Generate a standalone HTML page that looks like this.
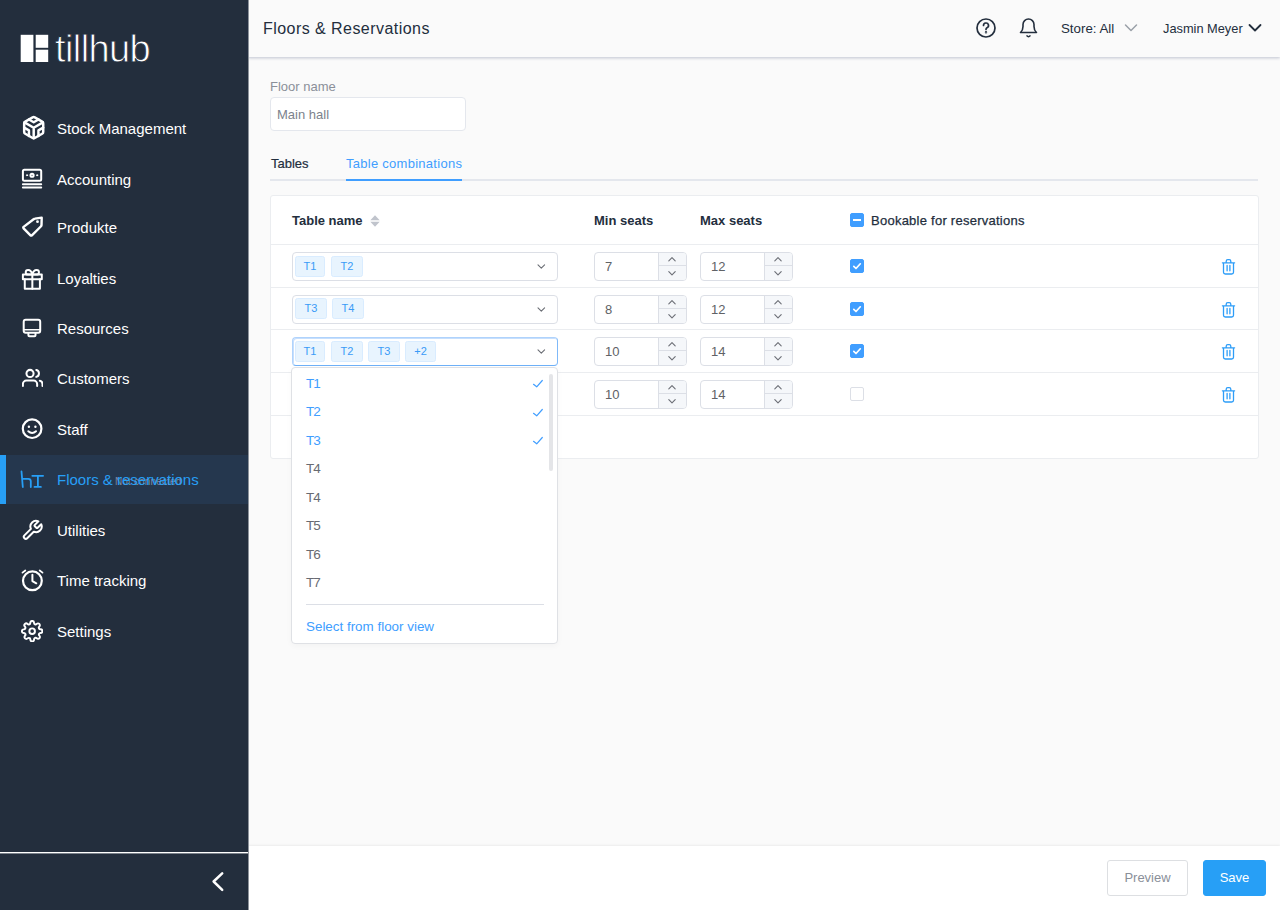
<!DOCTYPE html>
<html lang="en">
<head>
<meta charset="utf-8">
<title>Floors &amp; Reservations</title>
<style>
*{box-sizing:border-box;margin:0;padding:0}
html,body{width:1280px;height:910px;overflow:hidden}
body{font-family:"Liberation Sans",sans-serif;background:#fafafa;color:#232e3d;position:relative}
.abs{position:absolute}
/* sidebar */
#side{position:absolute;left:0;top:0;width:248px;height:910px;background:#232e3d;color:#fff}
#side .item{position:absolute;left:0;width:248px;height:50px}
#side .item .lbl{position:absolute;left:57px;top:0;height:50px;line-height:50px;font-size:15px;white-space:nowrap;color:#fff}
#side .item svg{position:absolute;left:20px;top:13px;width:24px;height:24px;fill:none;stroke:#fff;stroke-width:2;stroke-linecap:round;stroke-linejoin:round}
#side .item.act{background:#25374e;height:49px}
#side .item.act:before{content:"";position:absolute;left:0;top:0;width:6px;height:100%;background:#279ff6}
#side .item.act .lbl{color:#279ff6}
#side .item.act svg{stroke:#279ff6}
/* header */
#head{position:absolute;left:248px;top:0;width:1032px;height:57px;background:#fafafa;box-shadow:0 1px 3px rgba(40,55,100,.28)}
#head .title{position:absolute;left:15px;top:0;line-height:57px;font-size:16px;letter-spacing:.45px;color:#232e3d;white-space:nowrap}
#head .txt{position:absolute;top:0;line-height:57px;font-size:13.300px;color:#232e3d;white-space:nowrap}
/* content */
.t13{font-size:13px;white-space:nowrap}
#card{position:absolute;left:270px;top:195px;width:989px;height:264px;background:#fff;border:1px solid #ebedf0;border-radius:3px}
.hr{position:absolute;left:0;width:987px;height:1px;background:#ebedf0}
.th{position:absolute;top:0;height:49px;line-height:49px;font-size:13px;font-weight:bold;color:#232e3d;white-space:nowrap}
.sel{position:absolute;left:21px;width:266px;height:29px;border:1px solid #dcdfe6;border-radius:4px;background:#fff}
.sel.focus{border-color:#b0d3fc #7fb9f9 #6fb1f8 #b0d3fc;box-shadow:inset 1px 1px 0 #c6dffd}
.tag{position:absolute;top:3px;height:21px;line-height:19px;border:1px solid #d9ecff;background:#e8f4fe;color:#3a9bf7;font-size:11px;border-radius:2.500px;text-align:center}
.num{position:absolute;width:93px;height:29px;border:1px solid #dcdfe6;border-radius:4px;background:#fff;overflow:hidden}
.num .v{position:absolute;left:10px;top:0;line-height:27px;font-size:13px;color:#606266}
.num .sp{position:absolute;right:0;top:0;width:28px;height:27px;background:#f5f7fa;border-left:1px solid #dcdfe6}
.num .sp:before{content:"";position:absolute;left:0;top:12px;width:27px;height:1px;background:#dcdfe6}
.cb{position:absolute;width:14px;height:14px;border-radius:2px;background:#409eff;border:1px solid #409eff}
.cb.off{background:#fff;border-color:#dcdfe6}
svg.ic{position:absolute;fill:none;stroke-linecap:round;stroke-linejoin:round}
/* dropdown */
#dd{position:absolute;left:291px;top:367px;width:267px;height:277px;background:#fff;border:1px solid #dfe1e5;border-radius:4px;box-shadow:0 2px 6px rgba(0,0,0,.03)}
#dd .o{position:absolute;left:14px;height:28px;line-height:28px;font-size:13.5px;letter-spacing:-1px;color:#686b72}
#dd .o.s{color:#409eff}
/* footer */
#foot{position:absolute;left:248px;top:846px;width:1032px;height:64px;background:#fff;box-shadow:0 -1px 2px rgba(0,0,0,.06)}
.btn{position:absolute;top:14px;height:36px;line-height:34px;border-radius:3px;font-size:13px;text-align:center;border:1px solid #dddfe2;background:#fff;color:#8a8f99}
.btn.pri{background:#279ff6;border-color:#279ff6;color:#fff}
</style>
</head>
<body>

<!-- SIDEBAR -->
<div id="side">
  <svg class="abs" style="left:20px;top:34px" width="30" height="30" viewBox="0 0 30 30"><rect x="0.700" y="0.800" width="12.700" height="27.200" fill="#fff"/><rect x="15.700" y="0.800" width="12.500" height="13" fill="#fff"/><rect x="15.700" y="15.700" width="12.500" height="12.300" fill="#fff"/></svg>
  <div class="abs" id="logot" style="left:55px;top:27px;font-size:38px;line-height:44px;color:#fff;letter-spacing:-0.600px;-webkit-text-stroke:0.800px #232e3d">tillhub</div>
  <div class="item" style="top:104px"><span class="lbl">Stock Management</span></div>
  <div class="item" style="top:155px"><span class="lbl">Accounting</span></div>
  <div class="item" style="top:203px"><span class="lbl">Produkte</span></div>
  <div class="item" style="top:254px"><span class="lbl">Loyalties</span></div>
  <div class="item" style="top:304px"><span class="lbl">Resources</span></div>
  <div class="item" style="top:354px"><span class="lbl">Customers</span></div>
  <div class="item" style="top:405px"><span class="lbl">Staff</span></div>
  <div class="item act" style="top:455px"><span class="abs" style="left:115px;top:21px;font-size:10px;color:#7d8a9b;white-space:nowrap;line-height:12px;letter-spacing:.15px">Not connected</span><span class="lbl">Floors &amp; reservations</span></div>
  <div class="item" style="top:506px"><span class="lbl">Utilities</span></div>
  <div class="item" style="top:556px"><span class="lbl">Time tracking</span></div>
  <div class="item" style="top:607px"><span class="lbl">Settings</span></div>
  <svg class="ic" style="left:20.7px;top:115.3px;stroke:#fff;stroke-width:2.35" width="25.4" height="25.4" viewBox="0 0 24 24"><path d="M21 16V8a2 2 0 0 0-1-1.730l-7-4a2 2 0 0 0-2 0l-7 4A2 2 0 0 0 3 8v8a2 2 0 0 0 1 1.730l7 4a2 2 0 0 0 2 0l7-4A2 2 0 0 0 21 16z"/><path d="M7.500 4.210 12 6.810l4.500-2.600M7.500 19.790V14.600L3 12M21 12l-4.500 2.600v5.190M3.270 6.960 12 12.010l8.730-5.050M12 22.080V12"/></svg>
  <svg class="ic" style="left:20px;top:166px;stroke:#fff;stroke-width:2" width="24" height="24" viewBox="0 0 24 24"><rect x="2.900" y="3.800" width="18.300" height="10.900" rx="1.500"/><circle cx="12.050" cy="9.250" r="1.600"/><path d="M2.900 18.200h18.300M2.900 21.600h18.300"/><circle cx="7" cy="9.250" r=".6" fill="#fff" stroke-width="1"/><circle cx="17.100" cy="9.250" r=".6" fill="#fff" stroke-width="1"/></svg>
  <svg class="ic" style="left:20px;top:214px;stroke:#fff;stroke-width:2.2" width="26" height="26" viewBox="0 0 26 26"><path stroke-width="2.400" d="M21.700 3.600 15 4.600q-.8.100-1.400.7L3.600 12.900q-.7.700 0 1.400l6.900 7q.7.700 1.400 0l8.900-8.800q.6-.600.7-1.400z"/><circle cx="17.500" cy="7.700" r="1.400" fill="#fff" stroke="none"/></svg>
  <svg class="ic" style="left:20.949999999999996px;top:267.65px;stroke:#fff;stroke-width:2.1" width="22.7" height="22.7" viewBox="0 0 24 24"><path d="M20 12v10H4V12"/><rect x="2" y="7" width="20" height="5"/><path d="M12 22V7M12 7H7.500a2.500 2.500 0 0 1 0-5C11 2 12 7 12 7zM12 7h4.500a2.500 2.500 0 0 0 0-5C13 2 12 7 12 7z"/></svg>
  <svg class="ic" style="left:20px;top:316px;stroke:#fff;stroke-width:2" width="24" height="24" viewBox="0 0 24 24"><rect x="3.700" y="3.850" width="16.500" height="12.850" rx="2"/><path d="M3.700 13.700h16.500" stroke-width="1.500"/><path d="M8.400 17.700v1.500a1 1 0 0 0 1 1h5.100a1 1 0 0 0 1-1v-1.500"/></svg>
  <svg class="ic" style="left:21.9px;top:367px;stroke:#fff;stroke-width:2.25" width="21.4" height="21.8" viewBox="0 0 24 24"><path d="M17 21v-2a4 4 0 0 0-4-4H5a4 4 0 0 0-4 4v2"/><circle cx="9" cy="7" r="4"/><path d="M23 21v-2a4 4 0 0 0-3-3.870M16 3.130a4 4 0 0 1 0 7.750"/></svg>
  <svg class="ic" style="left:20px;top:416px;stroke:#fff;stroke-width:2.2" width="24" height="26" viewBox="0 0 24 26"><circle cx="12.100" cy="12.700" r="9.300"/><path d="M8.300 15.200q3.800 3.600 7.700 0" stroke-width="2"/><circle cx="8.900" cy="10.800" r="1.200" fill="#fff" stroke="none"/><circle cx="15.400" cy="10.800" r="1.200" fill="#fff" stroke="none"/></svg>
  <svg class="ic" style="left:18px;top:468px;stroke:#279ff6;stroke-width:1.8" width="28" height="22" viewBox="0 0 28 22"><path d="M3.500 3.500 4.800 19M4.300 10.800h6q2.500 0 2.500 2.500V19M14.300 7.800h10.800M19.900 7.800V18.900M16.500 18.900h6.400"/></svg>
  <svg class="ic" style="left:20.900000000000002px;top:518.7px;stroke:#fff;stroke-width:2.1" width="22.6" height="22.6" viewBox="0 0 24 24"><path d="M14.700 6.300a1 1 0 0 0 0 1.400l1.600 1.600a1 1 0 0 0 1.400 0l3.770-3.770a6 6 0 0 1-7.940 7.940l-6.910 6.910a2.120 2.120 0 0 1-3-3l6.910-6.910a6 6 0 0 1 7.940-7.940l-3.760 3.760z"/></svg>
  <svg class="ic" style="left:20px;top:568px;stroke:#fff;stroke-width:2.2" width="26" height="26" viewBox="0 0 26 26"><circle cx="12.400" cy="12.800" r="9.400"/><path d="M12.400 6.800v6.300l3.900 2.200" stroke-width="2"/><path d="M2.500 4.600 5.300 2.500M22.500 4.600 19.700 2.500" stroke-width="1.800"/></svg>
  <svg class="ic" style="left:20.9px;top:619.75px;stroke:#fff;stroke-width:2.1" width="22.3" height="22.3" viewBox="0 0 24 24"><circle cx="12" cy="12" r="3"/><path d="M19.400 15a1.650 1.650 0 0 0 .33 1.820l.06.06a2 2 0 1 1-2.830 2.830l-.06-.06a1.650 1.650 0 0 0-1.820-.33 1.650 1.650 0 0 0-1 1.510V21a2 2 0 0 1-4 0v-.09A1.650 1.650 0 0 0 9 19.400a1.650 1.650 0 0 0-1.820.33l-.06.06a2 2 0 1 1-2.830-2.830l.06-.06a1.650 1.650 0 0 0 .33-1.820 1.650 1.650 0 0 0-1.510-1H3a2 2 0 0 1 0-4h.09A1.650 1.650 0 0 0 4.600 9a1.650 1.650 0 0 0-.33-1.820l-.06-.06a2 2 0 1 1 2.830-2.830l.06.06a1.650 1.650 0 0 0 1.820.33H9a1.650 1.650 0 0 0 1-1.510V3a2 2 0 0 1 4 0v.09a1.650 1.650 0 0 0 1 1.510 1.650 1.650 0 0 0 1.820-.33l.06-.06a2 2 0 1 1 2.830 2.830l-.06.06a1.650 1.650 0 0 0-.33 1.820V9a1.650 1.650 0 0 0 1.510 1H21a2 2 0 0 1 0 4h-.09a1.650 1.650 0 0 0-1.510 1z"/></svg>
  <div class="abs" style="left:0;top:852px;width:248px;height:1px;background:#fff"></div><div class="abs" style="left:0;top:853px;width:248px;height:1px;background:#7b828b"></div>
  <svg class="ic" style="left:206px;top:869px;stroke:#fff;stroke-width:2.500" width="24" height="24" viewBox="0 0 24 24"><path d="M16.200 4.300 7.600 12.500l8.600 8.300"/></svg>
</div>

<div class="abs" style="left:248px;top:0;width:1px;height:910px;background:#8d939b;z-index:5"></div>

<!-- HEADER -->
<div id="head">
  <div class="title">Floors &amp; Reservations</div>
  <svg class="ic" style="left:727px;top:17px;stroke:#232e3d;stroke-width:1.700" width="22" height="22" viewBox="0 0 22 22"><circle cx="11" cy="11" r="9"/><path d="M8.500 8.500a2.500 2.500 0 1 1 3.500 2.300c-.7.400-1 .8-1 1.700"/><circle cx="11" cy="15.300" r=".35" fill="#232e3d"/></svg>
  <svg class="ic" style="left:769px;top:16px;stroke:#232e3d;stroke-width:1.600" width="22" height="24" viewBox="0 0 22 24"><path d="M3.500 16.500h16c-1.700-1.500-2.500-3.500-2.500-6V8.500a5.500 5.500 0 0 0-11 0v2c0 2.500-.8 4.500-2.500 6zM10 19.900a1.800 1.800 0 0 0 3 0"/></svg>
  <div class="txt" style="left:813px">Store: All</div>
  <svg class="ic" style="left:876px;top:23px;stroke:#9aa0a8;stroke-width:1.500" width="14" height="10" viewBox="0 0 14 10"><path d="M1.500 2 7 7.500 12.500 2"/></svg>
  <div class="txt" style="left:915px;font-size:12.800px">Jasmin Meyer</div>
  <svg class="ic" style="left:1000px;top:23px;stroke:#232e3d;stroke-width:1.800" width="14" height="10" viewBox="0 0 14 10"><path d="M1.500 2 7 7.500 12.500 2"/></svg>
</div>

<!-- CONTENT -->
<div class="abs t13" style="left:270px;top:79px;line-height:16px;color:#8a8f99">Floor name</div>
<div class="abs" style="left:270px;top:97px;width:196px;height:34px;border:1px solid #e4e7ed;border-radius:4px;background:#fff"></div>
<div class="abs t13" style="left:277px;top:107px;line-height:16px;color:#7c828c">Main hall</div>

<div class="abs t13" style="left:271px;top:156px;line-height:16px;color:#232e3d;-webkit-text-stroke:.2px #232e3d">Tables</div>
<div class="abs t13" style="left:346px;top:156px;line-height:16px;color:#409eff;letter-spacing:.27px">Table combinations</div>
<div class="abs" style="left:270px;top:179px;width:988px;height:2px;background:#e4e7ed"></div>
<div class="abs" style="left:346px;top:179px;width:116px;height:2px;background:#409eff"></div>

<div id="card">
  <div class="th" style="left:21px">Table name</div>
  <svg class="abs" style="left:99px;top:19px" width="10" height="12" viewBox="0 0 10 12"><path d="M5 0.300 9.700 5.200H.3zM5 11.700 9.700 6.800H.3z" fill="#c0c4cc"/></svg>
  <div class="th" style="left:323px">Min seats</div>
  <div class="th" style="left:429px">Max seats</div>
  <div class="cb" style="left:579px;top:17px"><i class="abs" style="left:2px;top:5px;width:8px;height:2px;background:#fff"></i></div>
  <div class="th bk" style="left:600px;font-weight:normal;letter-spacing:.25px;-webkit-text-stroke:.25px #232e3d">Bookable for reservations</div>
  <div class="hr" style="top:48px"></div>
  <div class="hr" style="top:91px"></div>
  <div class="hr" style="top:133px"></div>
  <div class="hr" style="top:176px"></div>
  <div class="hr" style="top:219px"></div>
  <!-- row -->
  <div class="sel" style="top:56px"><span class="tag" style="left:2px;width:30px">T1</span><span class="tag" style="left:38px;width:32px">T2</span><svg class="ic" style="left:240px;top:6px;stroke:#6b6e75;stroke-width:1.100" width="16" height="14" viewBox="0 0 16 14"><path d="M5 5.800 8.300 9.100 11.600 5.800"/></svg></div>
  <div class="num" style="left:323px;top:56px"><span class="v">7</span><span class="sp"><svg class="ic" style="left:0;top:0;stroke:#6b6e75;stroke-width:1.100" width="27" height="27" viewBox="0 0 27 27"><path d="M9.800 7.800 13 4.600 16.200 7.800M9.800 18.600 13 21.900 16.200 18.600"/></svg></span></div>
  <div class="num" style="left:429px;top:56px"><span class="v">12</span><span class="sp"><svg class="ic" style="left:0;top:0;stroke:#6b6e75;stroke-width:1.100" width="27" height="27" viewBox="0 0 27 27"><path d="M9.800 7.800 13 4.600 16.200 7.800M9.800 18.600 13 21.900 16.200 18.600"/></svg></span></div>
  <div class="cb" style="left:579px;top:63px"><svg class="ic" style="left:1px;top:1px;stroke:#fff;stroke-width:1.700" width="10" height="10" viewBox="0 0 10 10"><path d="M1.800 5.300 4 7.500 8.300 2.800"/></svg></div>
  <svg class="ic" style="left:950px;top:62px;stroke:#2d9df8;stroke-width:1.300" width="15" height="17" viewBox="0 0 15 17"><path d="M1.400 4.800h12.200M5.200 4.800V3.300a1.600 1.600 0 0 1 1.600-1.600h1.400a1.600 1.600 0 0 1 1.600 1.600v1.500M2.500 4.800v9.400a1.800 1.800 0 0 0 1.800 1.800h6.400a1.800 1.800 0 0 0 1.800-1.800V4.800M6.100 7.500v5.300M8.900 7.500v5.300"/></svg>
  <!-- row -->
  <div class="sel" style="top:99px"><span class="tag" style="left:2px;width:32px;top:2px">T3</span><span class="tag" style="left:39px;width:32px;top:2px">T4</span><svg class="ic" style="left:240px;top:6px;stroke:#6b6e75;stroke-width:1.100" width="16" height="14" viewBox="0 0 16 14"><path d="M5 5.800 8.300 9.100 11.600 5.800"/></svg></div>
  <div class="num" style="left:323px;top:99px"><span class="v">8</span><span class="sp"><svg class="ic" style="left:0;top:0;stroke:#6b6e75;stroke-width:1.100" width="27" height="27" viewBox="0 0 27 27"><path d="M9.800 7.800 13 4.600 16.200 7.800M9.800 18.600 13 21.900 16.200 18.600"/></svg></span></div>
  <div class="num" style="left:429px;top:99px"><span class="v">12</span><span class="sp"><svg class="ic" style="left:0;top:0;stroke:#6b6e75;stroke-width:1.100" width="27" height="27" viewBox="0 0 27 27"><path d="M9.800 7.800 13 4.600 16.200 7.800M9.800 18.600 13 21.900 16.200 18.600"/></svg></span></div>
  <div class="cb" style="left:579px;top:106px"><svg class="ic" style="left:1px;top:1px;stroke:#fff;stroke-width:1.700" width="10" height="10" viewBox="0 0 10 10"><path d="M1.800 5.300 4 7.500 8.300 2.800"/></svg></div>
  <svg class="ic" style="left:950px;top:105px;stroke:#2d9df8;stroke-width:1.300" width="15" height="17" viewBox="0 0 15 17"><path d="M1.400 4.800h12.200M5.200 4.800V3.300a1.600 1.600 0 0 1 1.600-1.600h1.400a1.600 1.600 0 0 1 1.600 1.600v1.500M2.500 4.800v9.400a1.800 1.800 0 0 0 1.800 1.800h6.400a1.800 1.800 0 0 0 1.800-1.800V4.800M6.100 7.500v5.300M8.900 7.500v5.300"/></svg>
  <!-- row -->
  <div class="sel focus" style="top:141px"><span class="tag" style="left:2px;width:30px">T1</span><span class="tag" style="left:38px;width:32px">T2</span><span class="tag" style="left:75px;width:32px">T3</span><span class="tag" style="left:112px;width:31px">+2</span><svg class="ic" style="left:240px;top:6px;stroke:#6b6e75;stroke-width:1.100" width="16" height="14" viewBox="0 0 16 14"><path d="M5 5.800 8.300 9.100 11.600 5.800"/></svg></div>
  <div class="num" style="left:323px;top:141px"><span class="v">10</span><span class="sp"><svg class="ic" style="left:0;top:0;stroke:#6b6e75;stroke-width:1.100" width="27" height="27" viewBox="0 0 27 27"><path d="M9.800 7.800 13 4.600 16.200 7.800M9.800 18.600 13 21.900 16.200 18.600"/></svg></span></div>
  <div class="num" style="left:429px;top:141px"><span class="v">14</span><span class="sp"><svg class="ic" style="left:0;top:0;stroke:#6b6e75;stroke-width:1.100" width="27" height="27" viewBox="0 0 27 27"><path d="M9.800 7.800 13 4.600 16.200 7.800M9.800 18.600 13 21.900 16.200 18.600"/></svg></span></div>
  <div class="cb" style="left:579px;top:148px"><svg class="ic" style="left:1px;top:1px;stroke:#fff;stroke-width:1.700" width="10" height="10" viewBox="0 0 10 10"><path d="M1.800 5.300 4 7.500 8.300 2.800"/></svg></div>
  <svg class="ic" style="left:950px;top:147px;stroke:#2d9df8;stroke-width:1.300" width="15" height="17" viewBox="0 0 15 17"><path d="M1.400 4.800h12.200M5.200 4.800V3.300a1.600 1.600 0 0 1 1.600-1.600h1.400a1.600 1.600 0 0 1 1.600 1.600v1.500M2.500 4.800v9.400a1.800 1.800 0 0 0 1.800 1.800h6.400a1.800 1.800 0 0 0 1.800-1.800V4.800M6.100 7.500v5.300M8.900 7.500v5.300"/></svg>
  <!-- row -->
  <div class="num" style="left:323px;top:184px"><span class="v">10</span><span class="sp"><svg class="ic" style="left:0;top:0;stroke:#6b6e75;stroke-width:1.100" width="27" height="27" viewBox="0 0 27 27"><path d="M9.800 7.800 13 4.600 16.200 7.800M9.800 18.600 13 21.900 16.200 18.600"/></svg></span></div>
  <div class="num" style="left:429px;top:184px"><span class="v">14</span><span class="sp"><svg class="ic" style="left:0;top:0;stroke:#6b6e75;stroke-width:1.100" width="27" height="27" viewBox="0 0 27 27"><path d="M9.800 7.800 13 4.600 16.200 7.800M9.800 18.600 13 21.900 16.200 18.600"/></svg></span></div>
  <div class="cb off" style="left:579px;top:191px"></div>
  <svg class="ic" style="left:950px;top:190px;stroke:#2d9df8;stroke-width:1.300" width="15" height="17" viewBox="0 0 15 17"><path d="M1.400 4.800h12.200M5.200 4.800V3.300a1.600 1.600 0 0 1 1.600-1.600h1.400a1.600 1.600 0 0 1 1.600 1.600v1.500M2.500 4.800v9.400a1.800 1.800 0 0 0 1.800 1.800h6.400a1.800 1.800 0 0 0 1.800-1.800V4.800M6.100 7.500v5.300M8.900 7.500v5.300"/></svg>
</div>

<!-- DROPDOWN -->
<div id="dd">
  <div class="o s" style="top:2px">T1</div>
  <div class="o s" style="top:30px">T2</div>
  <div class="o s" style="top:59px">T3</div>
  <div class="o" style="top:87px">T4</div>
  <div class="o" style="top:116px">T4</div>
  <div class="o" style="top:144px">T5</div>
  <div class="o" style="top:173px">T6</div>
  <div class="o" style="top:201px">T7</div>
  <svg class="ic" style="left:238px;top:10.0px;stroke:#409eff;stroke-width:1.200" width="16" height="12" viewBox="0 0 16 12"><path d="M3.500 6.300 6.700 8.800 12.300 2.500"/></svg>
  <svg class="ic" style="left:238px;top:38.6px;stroke:#409eff;stroke-width:1.200" width="16" height="12" viewBox="0 0 16 12"><path d="M3.500 6.300 6.700 8.800 12.300 2.500"/></svg>
  <svg class="ic" style="left:238px;top:67.1px;stroke:#409eff;stroke-width:1.200" width="16" height="12" viewBox="0 0 16 12"><path d="M3.500 6.300 6.700 8.800 12.300 2.500"/></svg>
  <div class="abs" style="left:14px;top:236px;width:238px;height:1px;background:#dcdfe6"></div>
  <div class="abs" style="left:14px;top:251px;font-size:13.400px;line-height:16px;color:#409eff;white-space:nowrap">Select from floor view</div>
  <div class="abs" style="left:257px;top:6px;width:4px;height:97px;border-radius:2px;background:#e4e5e8"></div>
</div>

<!-- FOOTER -->
<div id="foot">
  <div class="btn" style="left:859px;width:81px">Preview</div>
  <div class="btn pri" style="left:955px;width:63px">Save</div>
</div>

</body>
</html>
